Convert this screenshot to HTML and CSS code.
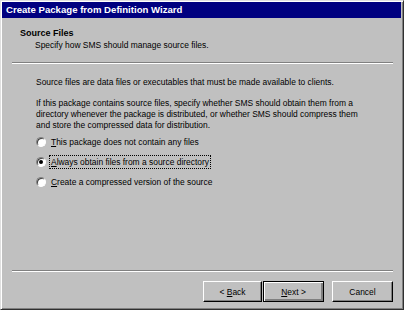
FILE: index.html
```html
<!DOCTYPE html>
<html>
<head>
    <title>Create Package from Definition Wizard</title>
    <link rel="stylesheet" href="styles.css">
</head>
<body>
    <div class="window">
        <div class="title-bar">Create Package from Definition Wizard</div>

        <div class="header">
            <div class="header-title">Source Files</div>
            <div class="header-sub">Specify how SMS should manage source files.</div>
        </div>

        <div class="separator top-sep"></div>

        <div class="body">
            <p class="intro">Source files are data files or executables that must be made available to clients.</p>
            <p class="para">If this package contains source files, specify whether SMS should obtain them from a directory whenever the package is distributed, or whether SMS should compress them and store the compressed data for distribution.</p>

            <div class="options">
                <label class="option">
                    <span class="radio"></span>
                    <span class="option-text"><u>T</u>his package does not contain any files</span>
                </label>
                <label class="option">
                    <span class="radio checked"></span>
                    <span class="option-text focused"><u>A</u>lways obtain files from a source directory</span>
                </label>
                <label class="option">
                    <span class="radio"></span>
                    <span class="option-text"><u>C</u>reate a compressed version of the source</span>
                </label>
            </div>
        </div>

        <div class="separator bottom-sep"></div>

        <div class="button-row">
            <button class="win-button">&lt; <u>B</u>ack</button>
            <button class="win-button default"><u>N</u>ext &gt;</button>
            <button class="win-button cancel">Cancel</button>
        </div>
    </div>
</body>
</html>
```

FILE: styles.css
```css
html, body {
    margin: 0;
    padding: 0;
    background-color: #c0c0c0;
}

body {
    font-family: "Liberation Sans", Arial, sans-serif;
    font-size: 8.45px;
    color: #000000;
}

.window {
    width: 404px;
    height: 310px;
    box-sizing: border-box;
    background-color: #c0c0c0;
    border: 1px solid;
    border-color: #dfdfdf #303030 #303030 #dfdfdf;
    box-shadow: inset 1px 1px #ffffff, inset -1px -1px #808080;
    padding: 1px 2px 2px 1px;
    display: flex;
    flex-direction: column;
}

.title-bar {
    height: 16px;
    line-height: 16px;
    background-color: #000080;
    color: #ffffff;
    font-weight: bold;
    font-size: 9.6px;
    padding-left: 4px;
}

.header {
    padding: 9px 0 0 18px;
}

.header-title {
    font-weight: bold;
    font-size: 9px;
    line-height: 12px;
}

.header-sub {
    line-height: 12px;
    padding-left: 15px;
}

.separator {
    height: 1px;
    background-color: #808080;
    border-bottom: 1px solid #ffffff;
    margin: 0 8px 0 10px;
}

.top-sep {
    margin-top: 11px;
}

.body {
    flex-grow: 1;
    padding: 12px 30px 0 34px;
}

.intro {
    margin: 0;
    line-height: 12px;
}

.para {
    margin: 10px 0 0 0;
    line-height: 11px;
}

.options {
    margin-top: 1px;
    display: flex;
    flex-direction: column;
}

.option {
    display: flex;
    align-items: center;
    height: 20px;
}

.radio {
    width: 8px;
    height: 8px;
    border-radius: 50%;
    background-color: #ffffff;
    border: 1px solid;
    border-color: #808080 #ffffff #ffffff #808080;
    box-shadow: inset 1px 1px #404040;
    margin-right: 3px;
    position: relative;
}

.radio.checked::after {
    content: "";
    position: absolute;
    left: 2px;
    top: 2px;
    width: 4px;
    height: 4px;
    border-radius: 50%;
    background-color: #000000;
}

.option-text {
    padding: 1px 1px;
    border: 1px solid transparent;
}

.option-text.focused {
    border: 1px dotted #000000;
}

.button-row {
    display: flex;
    justify-content: flex-end;
    padding: 9px 8px 5px 0;
}

.win-button {
    width: 59px;
    height: 21px;
    box-sizing: border-box;
    font-family: "Liberation Sans", Arial, sans-serif;
    font-size: 8.45px;
    color: #000000;
    background-color: #c0c0c0;
    border: 1px solid;
    border-color: #ffffff #000000 #000000 #ffffff;
    box-shadow: inset -1px -1px #808080;
    padding: 0;
    margin-left: 1px;
}

.win-button.default {
    width: 61px;
    border: 1px solid #000000;
    box-shadow: inset 1px 1px #ffffff, inset -2px -2px #808080;
}

.win-button.cancel {
    width: 61px;
    margin-left: 8px;
}
```
